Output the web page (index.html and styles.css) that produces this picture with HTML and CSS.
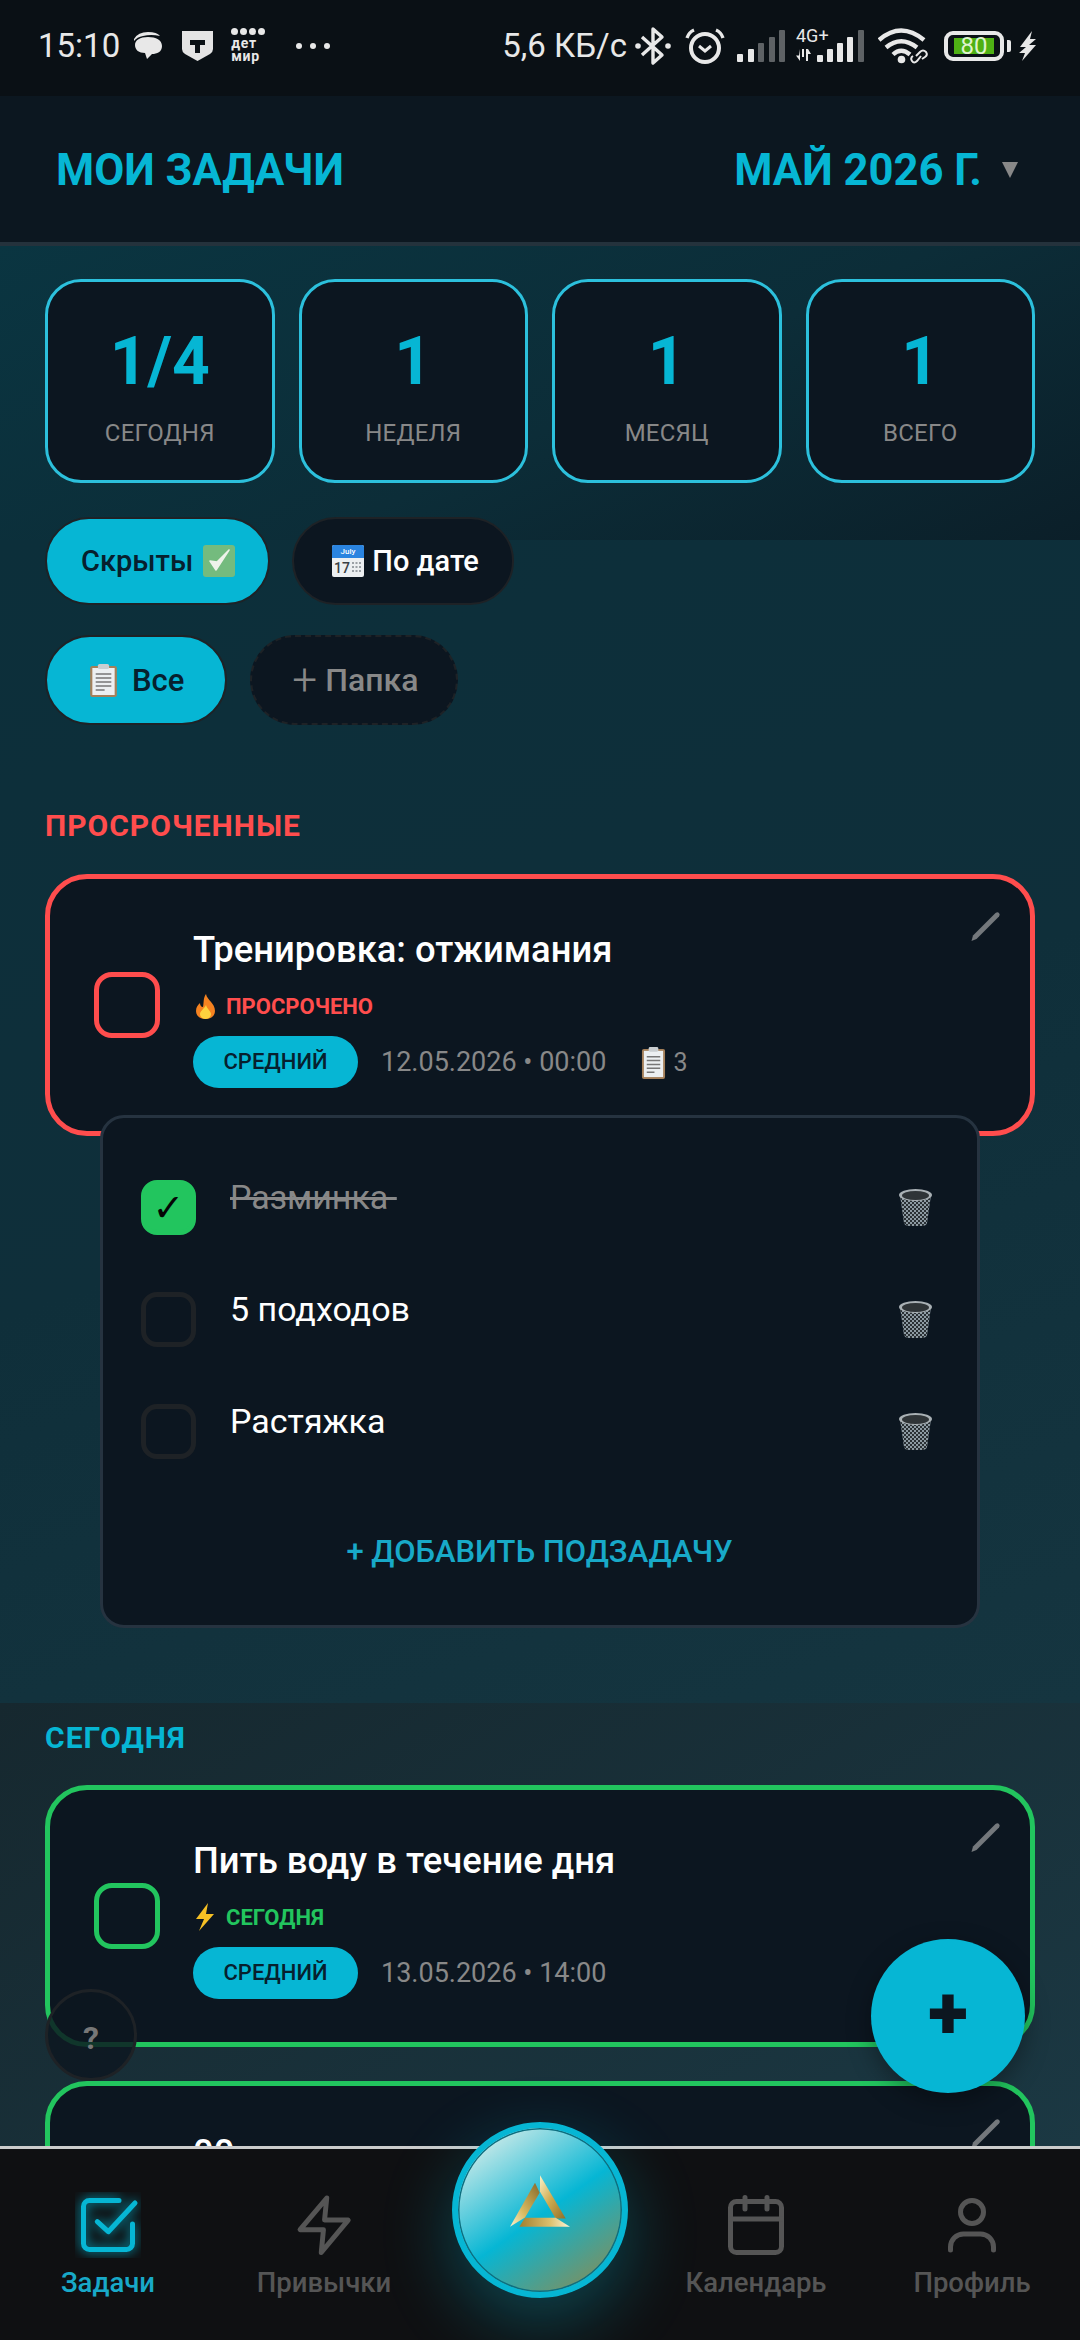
FILE: index.html
```html
<!DOCTYPE html>
<html lang="ru">

<head>
    <meta charset="UTF-8">
    <meta name="viewport" content="width=device-width, initial-scale=1.0">
    <title>Мои задачи</title>
    <link rel="stylesheet" href="styles.css">
</head>

<body>
    <!-- shared icons -->
    <svg class="icon-defs" width="0" height="0">
        <defs>
            <pattern id="mesh" width="4" height="4" patternUnits="userSpaceOnUse">
                <path d="M0 0L4 4M4 0L0 4" stroke="#2a3034" stroke-width="1"></path>
            </pattern>
            <linearGradient id="goldBar" x1="0" y1="0" x2="1" y2="0">
                <stop offset="0" stop-color="#a07f2e"></stop>
                <stop offset="0.6" stop-color="#dcbf6c"></stop>
                <stop offset="1" stop-color="#fdf6d8"></stop>
            </linearGradient>
            <linearGradient id="goldLeft" x1="1" y1="0" x2="0" y2="1">
                <stop offset="0" stop-color="#85682a"></stop>
                <stop offset="0.6" stop-color="#d8b95f"></stop>
                <stop offset="1" stop-color="#fbf3cf"></stop>
            </linearGradient>
            <linearGradient id="goldRight" x1="0" y1="0" x2="1" y2="1">
                <stop offset="0" stop-color="#fdf3c9"></stop>
                <stop offset="0.5" stop-color="#cda94e"></stop>
                <stop offset="1" stop-color="#8f7029"></stop>
            </linearGradient>
            <symbol id="i-pencil" viewBox="0 0 30 30">
                <path d="M0.5 30L2 24.5L24.5 2Q26.5 0.5 28 2Q29.5 3.500 28 5.500L5.500 28Z" fill="#74787c"></path>
            </symbol>
            <symbol id="i-clip" viewBox="0 0 26 34" preserveAspectRatio="none">
                <rect x="1" y="3" width="24" height="31" rx="2" fill="#a5805a"></rect>
                <rect x="3" y="5" width="20" height="27" fill="#eceff1"></rect>
                <path d="M6 11H20M6 15H20M6 19H20M6 23H20M6 27H14" stroke="#777" stroke-width="1.6"></path>
                <rect x="8" y="1" width="10" height="5" rx="1.5" fill="#c9ced1"></rect>
            </symbol>
            <symbol id="i-trash" viewBox="0 0 33 37">
                <path d="M1 6L5 34Q6 37 10 37H23Q27 37 28 34L32 6Z" fill="#8d9aa2"></path>
                <path d="M1 6L5 34Q6 37 10 37H23Q27 37 28 34L32 6Z" fill="url(#mesh)"></path>
                <ellipse cx="16.5" cy="6" rx="16.5" ry="6" fill="#a9b0b4"></ellipse>
                <ellipse cx="16.5" cy="6.5" rx="13.5" ry="4.5" fill="#2f3437"></ellipse>
            </symbol>
        </defs>
    </svg>

    <div class="app">
        <div class="status-bar">
            <div class="status-left">
                <span class="clock">15:10</span>
                <svg class="st-chat" width="30" height="29" viewBox="0 0 30 29">
                    <path d="M1 8Q5 1 15 1Q24 1 27 5Q18 3 10 5Q4 6 1 10Z" fill="#e8e8e8"></path>
                    <path d="M15 6C23 6 29 9 29 15C29 21 24 23 19 23L14 28L12 22C6 22 2 19 2 14C2 9 7 6 15 6Z" fill="#e8e8e8"></path>
                </svg>
                <svg class="st-shield" width="31" height="30" viewBox="0 0 31 30">
                    <path d="M0 0H31V18Q31 21 28 23L15.5 30L3 23Q0 21 0 18Z" fill="#e4e4e4"></path>
                    <path d="M8 9H23V14H18V22H13V14H8Z" fill="#0a1015"></path>
                </svg>
                <div class="st-brand">
                    <span class="brand-dots"><i></i><i></i><i></i><i></i></span>
                    <span>дет</span>
                    <span>мир</span>
                </div>
                <span class="st-more"><i></i><i></i><i></i></span>
            </div>
            <div class="status-right">
                <span class="speed">5,6 КБ/с</span>
                <svg width="36" height="40" viewBox="0 0 36 40">
                    <path d="M7 11L27 29L18 37V3L27 11L7 29" fill="none" stroke="#e8e8e8" stroke-width="3.4" stroke-linejoin="round"></path>
                    <circle cx="3" cy="20" r="2.8" fill="#e8e8e8"></circle>
                    <circle cx="33" cy="20" r="2.8" fill="#e8e8e8"></circle>
                </svg>
                <svg class="st-alarm" width="40" height="36" viewBox="0 0 40 36">
                    <circle cx="20" cy="20" r="14" fill="none" stroke="#e8e8e8" stroke-width="4"></circle>
                    <path d="M14 18L20 23L26 18" fill="none" stroke="#e8e8e8" stroke-width="3"></path>
                    <path d="M2 10Q4 4 9 2M38 10Q36 4 31 2" fill="none" stroke="#e8e8e8" stroke-width="3.4"></path>
                </svg>
                <svg class="st-signal" width="48" height="32" viewBox="0 0 48 32">
                    <rect x="0" y="24" width="6" height="8" rx="1" fill="#e8e8e8"></rect>
                    <rect x="11" y="19" width="6" height="13" rx="1" fill="#e8e8e8"></rect>
                    <rect x="21" y="13" width="6" height="19" rx="1" fill="#5e6265"></rect>
                    <rect x="32" y="7" width="6" height="25" rx="1" fill="#5e6265"></rect>
                    <rect x="42" y="0" width="6" height="32" rx="1" fill="#5e6265"></rect>
                </svg>
                <div class="st-lte">
                    <span class="lte-label">4G+</span>
                    <svg width="68" height="32" viewBox="0 0 68 32">
                        <path d="M4 19V31L0 25.5H3ZM6 19H8V27H6ZM10 19H12L15 24H12V31H10Z" fill="#e8e8e8"></path>
                        <rect x="21" y="25" width="6" height="7" rx="1" fill="#e8e8e8"></rect>
                        <rect x="31" y="19" width="6" height="13" rx="1" fill="#e8e8e8"></rect>
                        <rect x="41" y="13" width="6" height="19" rx="1" fill="#e8e8e8"></rect>
                        <rect x="51" y="7" width="6" height="25" rx="1" fill="#e8e8e8"></rect>
                        <rect x="62" y="0" width="6" height="32" rx="1" fill="#5e6265"></rect>
                    </svg>
                </div>
                <svg class="st-wifi" width="52" height="36" viewBox="0 0 52 36">
                    <path d="M1 12Q23 -7 46 12M8 19.5Q23 7 39 19.5M15 26.5Q23 19 32 26.5" fill="none" stroke="#e8e8e8" stroke-width="4.4"></path>
                    <circle cx="23.5" cy="31.5" r="3.8" fill="#e8e8e8"></circle>
                    <path d="M38 28L42 24Q45 21 48 24Q50 27 47 29L44 31M43 28L39 33Q36 36 34 33Q32 30 35 28" fill="none" stroke="#e8e8e8" stroke-width="2"></path>
                </svg>
                <div class="st-battery">
                    <div class="battery-body">
                        <span class="battery-fill">80</span>
                    </div>
                    <span class="battery-tip"></span>
                </div>
                <svg class="st-bolt" width="18" height="30" viewBox="0 0 18 30">
                    <path d="M13 0L1 16H7L0 22L6 22L3 30L17 14H10L17 8H11Z" fill="#e8e8e8"></path>
                </svg>
            </div>
        </div>

        <header class="app-header">
            <h1>МОИ ЗАДАЧИ</h1>
            <div class="month-picker">
                <span>МАЙ 2026 Г.</span>
                <i class="caret"></i>
            </div>
        </header>

        <main class="content">
            <section class="stats">
                <div class="stat-card">
                    <div class="stat-num">1/4</div>
                    <div class="stat-label">СЕГОДНЯ</div>
                </div>
                <div class="stat-card">
                    <div class="stat-num">1</div>
                    <div class="stat-label">НЕДЕЛЯ</div>
                </div>
                <div class="stat-card">
                    <div class="stat-num">1</div>
                    <div class="stat-label">МЕСЯЦ</div>
                </div>
                <div class="stat-card">
                    <div class="stat-num">1</div>
                    <div class="stat-label">ВСЕГО</div>
                </div>
            </section>

            <div class="chip-row">
                <button class="chip chip-active chip-hidden">Скрыты
                    <svg width="32" height="32" viewBox="0 0 32 32">
                        <rect width="32" height="32" rx="3" fill="#74bb7e"></rect>
                        <path d="M7 16L13 25L26 5L14 17Z" fill="#eef3ea" stroke="#eef3ea" stroke-width="1.5" stroke-linejoin="round"></path>
                    </svg>
                </button>
                <button class="chip chip-dark">
                    <svg width="32" height="32" viewBox="0 0 32 32">
                        <rect width="32" height="32" rx="2" fill="#eceff1"></rect>
                        <path d="M0 2Q0 0 2 0H30Q32 0 32 2V13H0Z" fill="#2a84e0"></path>
                        <text class="cal-month" x="16" y="9">July</text>
                        <text class="cal-day" x="2" y="28">17</text>
                        <path d="M20 18H30M20 22H30M20 26H30" stroke="#9aa0a5" stroke-width="2" stroke-dasharray="2 1.5"></path>
                    </svg>
                    По дате
                </button>
            </div>

            <div class="chip-row chip-row-big">
                <button class="chip chip-active chip-all">
                    <svg width="29" height="34"><use href="#i-clip" width="29" height="34"></use></svg>
                    Все
                </button>
                <button class="chip chip-add"><span class="add-plus">+</span> Папка</button>
            </div>

            <h2 class="group-title title-overdue">ПРОСРОЧЕННЫЕ</h2>

            <article class="task-card card-overdue">
                <svg class="task-edit" width="30" height="30"><use href="#i-pencil"></use></svg>
                <div class="task-check"></div>
                <div class="task-body">
                    <div class="task-title">Тренировка: отжимания</div>
                    <div class="task-state">
                        <svg width="25" height="25" viewBox="0 0 25 25">
                            <path d="M13 0C14 6 22 9 22 17C22 22 18 25 12.5 25C7 25 3 22 3 17C3 13 5 11 7 9C7 11 8 13 10 13C11 9 10 4 13 0Z" fill="#f58220"></path>
                            <path d="M13 11C14 15 18 17 18 20C18 23 15.5 25 12.5 25C9.5 25 7 23 7 20C7 17 11 15 13 11Z" fill="#fdd23e"></path>
                        </svg>
                        <span>ПРОСРОЧЕНО</span>
                    </div>
                    <div class="task-meta">
                        <span class="priority">СРЕДНИЙ</span>
                        <span class="task-date">12.05.2026 • 00:00</span>
                        <span class="task-subs">
                            <svg width="25" height="33"><use href="#i-clip" width="25" height="33"></use></svg>
                            3
                        </span>
                    </div>
                </div>
            </article>

            <section class="subtasks">
                <div class="subtask">
                    <div class="sub-check sub-done">✓</div>
                    <span class="sub-text sub-text-done">Разминка&nbsp;</span>
                    <svg class="sub-trash" width="33" height="37"><use href="#i-trash"></use></svg>
                </div>
                <div class="subtask">
                    <div class="sub-check"></div>
                    <span class="sub-text">5 подходов</span>
                    <svg class="sub-trash" width="33" height="37"><use href="#i-trash"></use></svg>
                </div>
                <div class="subtask">
                    <div class="sub-check"></div>
                    <span class="sub-text">Растяжка</span>
                    <svg class="sub-trash" width="33" height="37"><use href="#i-trash"></use></svg>
                </div>
                <div class="add-subtask">+ ДОБАВИТЬ ПОДЗАДАЧУ</div>
            </section>

            <h2 class="group-title title-today">СЕГОДНЯ</h2>

            <article class="task-card card-today">
                <svg class="task-edit" width="30" height="30"><use href="#i-pencil"></use></svg>
                <div class="task-check"></div>
                <div class="task-body">
                    <div class="task-title">Пить воду в течение дня</div>
                    <div class="task-state">
                        <svg width="25" height="28" viewBox="0 0 25 28">
                            <path d="M15 0L3 16H11L6 28L21 11H13Z" fill="#f6c024"></path>
                        </svg>
                        <span>СЕГОДНЯ</span>
                    </div>
                    <div class="task-meta">
                        <span class="priority">СРЕДНИЙ</span>
                        <span class="task-date">13.05.2026 • 14:00</span>
                    </div>
                </div>
            </article>

            <article class="task-card card-today card-cut">
                <svg class="task-edit" width="30" height="30"><use href="#i-pencil"></use></svg>
                <div class="task-check"></div>
                <div class="task-body">
                    <div class="task-title">00</div>
                </div>
            </article>
        </main>

        <nav class="bottom-nav">
            <a class="nav-item nav-active">
                <svg width="66" height="66" viewBox="0 0 66 66">
                    <defs>
                        <filter id="navGlow" filterUnits="userSpaceOnUse" x="0" y="0" width="66" height="66">
                            <feGaussianBlur stdDeviation="6"></feGaussianBlur>
                        </filter>
                    </defs>
                    <g fill="none" stroke="#06b6d4" stroke-width="5" stroke-linecap="round" stroke-linejoin="round">
                        <g filter="url(#navGlow)">
                            <path d="M44 8.5H14.5A6 6 0 0 0 8.5 14.5V51.5A6 6 0 0 0 14.5 57.5H51.5A6 6 0 0 0 57.5 51.5V32"></path>
                            <path d="M22.3 29.7L33.3 39.7L60 11"></path>
                        </g>
                        <path d="M44 8.5H14.5A6 6 0 0 0 8.5 14.5V51.5A6 6 0 0 0 14.5 57.5H51.5A6 6 0 0 0 57.5 51.5V32"></path>
                        <path d="M22.3 29.7L33.3 39.7L60 11"></path>
                    </g>
                </svg>
                <span>Задачи</span>
            </a>
            <a class="nav-item">
                <svg width="66" height="66" viewBox="0 0 24 24">
                    <polygon points="13 2.2 3.3 13.7 11.8 13.7 11 22 20.8 10.2 12.2 10.2" fill="none" stroke="#555" stroke-width="1.8" stroke-linejoin="round"></polygon>
                </svg>
                <span>Привычки</span>
            </a>
            <div class="nav-hub">
                <button class="hub-btn">
                    <svg width="60" height="52" viewBox="330 225 180 155">
                        <path d="M420 225L497 355H467L420 275Z" fill="url(#goldRight)"></path>
                        <path d="M375 353H467L510 380H358Z" fill="url(#goldBar)"></path>
                        <path d="M405 248L419 278L375 352L330 380Z" fill="url(#goldLeft)"></path>
                    </svg>
                </button>
            </div>
            <a class="nav-item">
                <svg width="66" height="66" viewBox="0 0 66 66" fill="none" stroke="#555" stroke-width="5" stroke-linecap="round">
                    <rect x="7.5" y="9.5" width="51" height="51" rx="6"></rect>
                    <path d="M7.5 27H58.5M22 5.5V17M44 5.5V17"></path>
                </svg>
                <span>Календарь</span>
            </a>
            <a class="nav-item">
                <svg width="66" height="66" viewBox="0 0 66 66" fill="none" stroke="#555" stroke-width="5" stroke-linecap="round">
                    <circle cx="33" cy="20" r="11.5"></circle>
                    <path d="M11.5 58V55A13 13 0 0 1 24.5 42H41.5A13 13 0 0 1 54.5 55V58"></path>
                </svg>
                <span>Профиль</span>
            </a>
        </nav>

        <button class="help-btn">?</button>
        <button class="fab">+</button>
    </div>
</body>

</html>
```

FILE: styles.css
```css
:root {
    --accent: #06b6d4;
    --accent-soft: #18a9c8;
    --card-bg: #0c1620;
    --red: #ff4d4d;
    --green: #22c55e;
    --muted: #888;
    --nav-muted: #555;
}

* {
    box-sizing: border-box;
}

body {
    margin: 0;
    font-family: 'Roboto', 'Noto Sans', sans-serif;
    background: #0a1015;
    color: #fff;
}

button {
    font-family: inherit;
    cursor: pointer;
}

.icon-defs {
    position: absolute;
}

.app {
    position: relative;
    display: flex;
    flex-direction: column;
    width: 1080px;
    height: 2340px;
    overflow: hidden;
}

/* status bar */
.status-bar {
    flex: none;
    display: flex;
    justify-content: space-between;
    align-items: center;
    height: 96px;
    padding: 0 43px 5px 38px;
    background: #0a1015;
    color: #e8e8e8;
}

.status-left,
.status-right {
    display: flex;
    align-items: center;
}

.clock {
    font-size: 33px;
    line-height: 1;
    margin-right: 13px;
}

.st-chat {
    margin-right: 19px;
}

.st-shield {
    margin-right: 18px;
}

.st-brand {
    display: flex;
    flex-direction: column;
    width: 36px;
    font-size: 14px;
    font-weight: 700;
    letter-spacing: 0.8px;
    line-height: 13px;
    margin-right: 29px;
}

.brand-dots {
    display: flex;
    gap: 2px;
    margin-bottom: 2px;
}

.brand-dots i {
    width: 7px;
    height: 7px;
    border-radius: 50%;
    background: #e8e8e8;
}

.st-more {
    display: flex;
    gap: 8px;
}

.st-more i {
    width: 6px;
    height: 6px;
    border-radius: 50%;
    background: #e8e8e8;
}

.speed {
    font-size: 33px;
    line-height: 1;
    margin-right: 8px;
}

.st-alarm {
    margin-left: 14px;
}

.st-signal {
    margin-left: 12px;
}

.st-lte {
    position: relative;
    margin-left: 11px;
    width: 68px;
    height: 32px;
}

.lte-label {
    position: absolute;
    left: 0;
    top: -3px;
    font-size: 18px;
    line-height: 1;
}

.st-wifi {
    margin-left: 14px;
}

.st-battery {
    display: flex;
    align-items: center;
    margin-left: 14px;
}

.battery-body {
    width: 60px;
    height: 30px;
    padding: 3px 15px 3px 6px;
    border: 4px solid #e8e8e8;
    border-radius: 9px;
}

.battery-fill {
    display: block;
    width: 40px;
    height: 16px;
    background: #4fb014;
    color: #dff3cf;
    font-size: 24px;
    line-height: 16px;
    text-align: center;
}

.battery-tip {
    width: 4px;
    height: 12px;
    margin-left: 3px;
    background: #e8e8e8;
    border-radius: 0 2px 2px 0;
}

.st-bolt {
    margin-left: 8px;
}

/* header */
.app-header {
    flex: none;
    display: flex;
    justify-content: space-between;
    align-items: center;
    height: 150px;
    padding: 2px 62px 0 56px;
    background: #0c1720;
    border-bottom: 4px solid #24323c;
    color: var(--accent);
}

.app-header h1 {
    margin: 0;
    font-size: 43.6px;
    font-weight: 700;
}

.month-picker {
    display: flex;
    align-items: center;
    gap: 20px;
    font-size: 43.6px;
    font-weight: 700;
}

.caret {
    width: 0;
    height: 0;
    border-left: 8px solid transparent;
    border-right: 8px solid transparent;
    border-top: 16px solid #888;
}

/* scrolling area, the bands are how the gradient comes out in the capture */
.content {
    flex: 1;
    min-height: 0;
    overflow: hidden;
    padding: 33px 45px 0;
    background:
        linear-gradient(155deg, #0a3541 0%, #0c2d38 55%, #0b1f29 100%) 0 0 / 100% 294px no-repeat,
        linear-gradient(160deg, #0c2f3a 0%, #0f2f3a 50%, #153540 100%) 0 294px / 100% 1163px no-repeat,
        linear-gradient(150deg, #16282f 0%, #1b3843 100%) 0 1457px / 100% 443px no-repeat;
}

.stats {
    display: grid;
    grid-template-columns: repeat(4, 1fr);
    gap: 24px;
}

.stat-card {
    display: flex;
    flex-direction: column;
    align-items: center;
    height: 204px;
    padding-top: 41px;
    background: var(--card-bg);
    border: 3px solid #2cc0dc;
    border-radius: 36px;
}

.stat-num {
    font-size: 66px;
    font-weight: 700;
    line-height: 78px;
    color: var(--accent);
}

.stat-label {
    margin-top: 17px;
    font-size: 24px;
    letter-spacing: 0.2px;
    line-height: 30px;
    color: var(--muted);
}

/* chips */
.chip-row {
    display: flex;
    gap: 22px;
    margin-top: 34px;
}

.chip-row-big {
    margin-top: 30px;
    gap: 23px;
}

.chip {
    display: flex;
    align-items: center;
    gap: 10px;
    height: 88px;
    border: 2px solid #1e2226;
    border-radius: 44px;
    font-size: 29px;
    font-weight: 500;
}

.chip-active {
    background: var(--accent);
    color: #06202e;
}

.chip-hidden {
    padding: 0 33px 0 34px;
}

.chip-dark {
    gap: 8px;
    background: var(--card-bg);
    color: #fff;
    padding: 0 33px 0 38px;
}

.chip-row-big .chip {
    height: 90px;
    font-size: 31px;
    border-radius: 45px;
}

.chip-row-big .chip-all {
    gap: 14px;
    padding: 0 41px 0 42px;
}

.chip-row-big .chip-add {
    gap: 8px;
    font-size: 32px;
    padding: 0 38px 0 40px;
    background: var(--card-bg);
    color: var(--muted);
    border-style: dashed;
}

.add-plus {
    font-size: 44px;
    font-weight: 300;
    line-height: 1;
}

.cal-month {
    font-size: 8px;
    fill: #fff;
    text-anchor: middle;
}

.cal-day {
    font-size: 14px;
    font-weight: 500;
    fill: #3a3f44;
}

/* task groups */
.group-title {
    margin: 85px 0 32px;
    font-size: 30px;
    font-weight: 700;
    line-height: 32px;
    letter-spacing: 1px;
}

.title-overdue {
    color: var(--red);
}

.title-today {
    margin-top: 94px;
    margin-bottom: 31px;
    color: var(--accent);
}

.task-card {
    position: relative;
    display: flex;
    align-items: center;
    gap: 33px;
    height: 262px;
    padding-left: 44px;
    background: var(--card-bg);
    border: 5px solid;
    border-radius: 42px;
}

.task-card + .task-card {
    margin-top: 34px;
}

.card-overdue {
    border-color: var(--red);
}

.card-today {
    border-color: var(--green);
}

.task-edit {
    position: absolute;
    top: 32px;
    right: 29px;
}

.task-check {
    flex: none;
    width: 66px;
    height: 66px;
    border: 5px solid;
    border-radius: 18px;
}

.card-overdue .task-check {
    border-color: var(--red);
}

.card-today .task-check {
    border-color: var(--green);
}

.task-body {
    display: flex;
    flex-direction: column;
    padding-top: 6px;
}

/* the card under the nav, only the top of its title shows */
.card-cut .task-body {
    align-self: flex-start;
    padding-top: 45px;
}

.task-title {
    font-size: 36.4px;
    font-weight: 500;
    line-height: 44px;
}

.task-state {
    display: flex;
    align-items: center;
    gap: 8px;
    height: 30px;
    margin-top: 19px;
    font-size: 22px;
    font-weight: 700;
}

.card-overdue .task-state {
    color: var(--red);
}

.card-today .task-state {
    color: var(--green);
}

.task-meta {
    display: flex;
    align-items: center;
    margin-top: 15px;
}

.priority {
    width: 165px;
    height: 52px;
    background: var(--accent);
    border-radius: 26px;
    color: #06202e;
    font-size: 22px;
    font-weight: 500;
    line-height: 52px;
    text-align: center;
}

.task-date {
    margin-left: 23px;
    font-size: 27px;
    color: var(--muted);
}

.task-subs {
    display: flex;
    align-items: center;
    gap: 7px;
    margin-left: 35px;
    font-size: 25px;
    color: var(--muted);
}

/* subtasks */
.subtasks {
    position: relative;
    height: 513px;
    margin: -21px 55px 0;
    padding: 62px 39px 0 38px;
    background: var(--card-bg);
    border: 3px solid #263340;
    border-radius: 24px;
}

.subtask {
    display: flex;
    align-items: center;
    height: 55px;
    margin-bottom: 57px;
}

.sub-check {
    flex: none;
    display: flex;
    align-items: center;
    justify-content: center;
    width: 55px;
    height: 55px;
    border: 5px solid #1e2226;
    border-radius: 16px;
    color: #050505;
    font-family: 'DejaVu Sans', sans-serif;
    font-size: 38px;
    font-weight: 700;
    line-height: 1;
}

.sub-done {
    background: var(--green);
    border-color: var(--green);
}

.sub-text {
    flex: 1;
    margin: 0 0 22px 34px;
    font-size: 34px;
    line-height: 40px;
}

.sub-text-done {
    color: var(--muted);
    text-decoration: line-through;
}

.sub-trash {
    flex: none;
    margin-right: 6px;
}

.add-subtask {
    margin-top: 75px;
    text-align: center;
    color: var(--accent-soft);
    font-size: 31px;
    font-weight: 500;
    line-height: 36px;
}

/* bottom nav */
.bottom-nav {
    flex: none;
    display: grid;
    grid-template-columns: repeat(5, 216px);
    height: 194px;
    padding-top: 43px;
    background: #0f1012;
    border-top: 3px solid #ccc;
}

.nav-item {
    display: flex;
    flex-direction: column;
    align-items: center;
    color: var(--nav-muted);
    font-size: 27.5px;
    font-weight: 500;
    line-height: 32px;
}

.nav-item span {
    margin-top: 9px;
}

.nav-active {
    color: var(--accent-soft);
}

.nav-hub {
    display: flex;
    justify-content: center;
}

.hub-btn {
    flex: none;
    position: relative;
    display: flex;
    align-items: center;
    justify-content: center;
    width: 176px;
    height: 176px;
    margin-top: -70px;
    padding: 0 0 18px;
    background: linear-gradient(145deg, #eef3ec 3%, #06b6d4 52%, #9a8644 100%);
    border: 6px solid var(--accent);
    border-radius: 50%;
    box-shadow: inset 0 0 0 1.5px #0d6f80, 0 24px 70px rgba(6, 182, 212, 0.32);
}

/* floating buttons */
.help-btn {
    position: absolute;
    left: 45px;
    bottom: 259px;
    width: 92px;
    height: 92px;
    padding: 5px 0 0;
    background: rgba(12, 22, 32, 0.82);
    border: 3px solid #1e2226;
    border-radius: 50%;
    color: #777;
    font-size: 32px;
    font-weight: 700;
}

.fab {
    position: absolute;
    right: 55px;
    bottom: 247px;
    width: 154px;
    height: 154px;
    padding: 0 0 4px;
    background: var(--accent);
    border: none;
    border-radius: 50%;
    box-shadow: 0 8px 24px rgba(0, 0, 0, 0.35);
    color: #0c1620;
    font-size: 74px;
    font-weight: 900;
    line-height: 1;
}
```
